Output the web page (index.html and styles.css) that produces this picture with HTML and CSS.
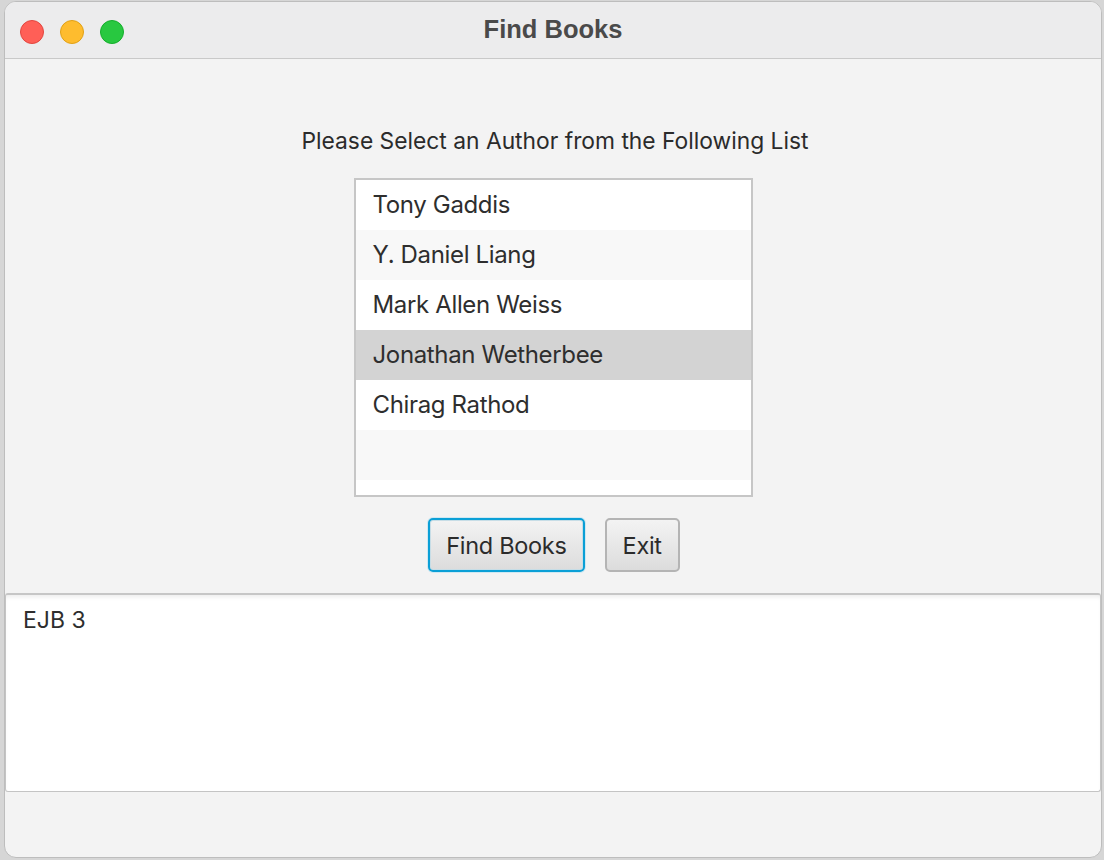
FILE: index.html
```html
<!DOCTYPE html>
<html>
<head>
<meta charset="utf-8">
<link rel="stylesheet" href="styles.css">
</head>
<body>
<div class="window">
  <div class="titlebar">
    <div class="lights">
      <span class="light red"></span>
      <span class="light yellow"></span>
      <span class="light green"></span>
    </div>
    <div class="title">Find Books</div>
  </div>
  <div class="content">
    <div class="top">
      <div class="prompt">Please Select an Author from the Following List</div>
      <div class="list">
        <div class="row">Tony Gaddis</div>
        <div class="row odd">Y. Daniel Liang</div>
        <div class="row">Mark Allen Weiss</div>
        <div class="row selected">Jonathan Wetherbee</div>
        <div class="row">Chirag Rathod</div>
        <div class="row odd empty"></div>
      </div>
      <div class="buttons">
        <button class="btn focused">Find Books</button>
        <button class="btn">Exit</button>
      </div>
    </div>
    <div class="output">EJB 3</div>
    <div class="bottom"></div>
  </div>
</div>
</body>
</html>
```
FILE: styles.css
```css
html, body {
  margin: 0;
  padding: 0;
}
body {
  width: 1104px;
  height: 860px;
  background: #d6d6d6;
  overflow: hidden;
  font-family: "Inter", "Liberation Sans", sans-serif;
}
.window {
  margin: 1px 2px 0 4px;
  width: 1098px;
  height: 857px;
  border-radius: 12px;
  background: #f3f3f3;
  border: 1px solid #bdbdbd;
  box-sizing: border-box;
  overflow: hidden;
  display: flex;
  flex-direction: column;
}
.titlebar {
  height: 56px;
  flex: 0 0 56px;
  background: #ececed;
  border-bottom: 1px solid #c9c9c9;
  display: flex;
  align-items: center;
  justify-content: center;
  position: relative;
}
.lights {
  position: absolute;
  left: 15px;
  top: 18px;
  display: flex;
  gap: 16px;
}
.light {
  width: 24px;
  height: 24px;
  border-radius: 50%;
  box-sizing: border-box;
}
.red { background: #ff5f57; border: 1px solid #e2463f; }
.yellow { background: #febc2e; border: 1px solid #e1a116; }
.green { background: #28c840; border: 1px solid #14ae2b; }
.title {
  font-family: "Liberation Sans", "Inter", sans-serif;
  font-weight: bold;
  font-size: 25.5px;
  color: #4a4a4a;
  margin-top: -2px;
  margin-left: 0;
}
.content {
  flex: 1;
  display: flex;
  flex-direction: column;
}
.top {
  display: flex;
  flex-direction: column;
  align-items: center;
  padding-top: 69px;
  height: 534px;
  box-sizing: border-box;
}
.prompt {
  font-size: 22.8px;
  color: #2b2b2b;
  letter-spacing: 0;
  line-height: 26px;
  margin-left: 4px;
}
.list {
  margin-top: 24px;
  width: 399px;
  height: 319px;
  box-sizing: border-box;
  border: 2px solid #c6c6c6;
  background: #ffffff;
}
.row {
  height: 50px;
  line-height: 50px;
  padding-left: 17px;
  font-size: 24px;
  color: #2e2e2e;
  letter-spacing: -0.35px;
  background: #ffffff;
}
.row.odd { background: #f8f8f8; }
.row.selected { background: #d3d3d3; }
.buttons {
  margin-top: 21px;
  display: flex;
  gap: 20px;
  margin-left: 2px;
}
.btn {
  font-family: "Inter", "Liberation Sans", sans-serif;
  font-size: 23.5px;
  letter-spacing: -0.3px;
  color: #2b2b2b;
  height: 54px;
  padding: 0 16px;
  border-radius: 5px;
  border: 2px solid #b4b4b4;
  background: linear-gradient(#f3f3f3, #dcdcdc);
  box-sizing: border-box;
}
.btn.focused {
  border: 2px solid #0a9fd6;
  box-shadow: inset 0 0 0 1px #c7dde6, 0 0 0 1px #cfe8f2;
}
.output {
  height: 199px;
  box-sizing: border-box;
  background: #ffffff;
  border: 1px solid #c4c4c4;
  border-top: 2px solid #c6c6c6;
  border-radius: 3px;
  box-shadow: inset 0 4px 4px -2px #ececec;
  padding: 11px 17px;
  font-size: 23px;
  color: #2e2e2e;
  line-height: 28px;
}
.bottom {
  flex: 1;
}
```
